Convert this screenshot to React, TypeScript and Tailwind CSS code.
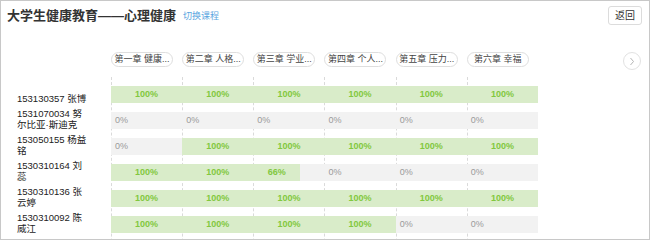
import React from "react";

const FONT = { fontFamily: '"Liberation Sans", "Noto Sans CJK SC", sans-serif' };

const chapters = [
  "第一章 健康...",
  "第二章 人格...",
  "第三章 学业...",
  "第四章 个人...",
  "第五章 压力...",
  "第六章 幸福",
];

const rows: { name: string; p: number[] }[] = [
  { name: "153130357 张博", p: [100, 100, 100, 100, 100, 100] },
  { name: "1531070034 努尔比亚·斯迪克", p: [0, 0, 0, 0, 0, 0] },
  { name: "153050155 杨益铭", p: [0, 100, 100, 100, 100, 100] },
  { name: "1530310164 刘蕊", p: [100, 100, 66, 0, 0, 0] },
  { name: "1530310136 张云婷", p: [100, 100, 100, 100, 100, 100] },
  { name: "1530310092 陈威江", p: [100, 100, 100, 100, 0, 0] },
];

function Cell({ pct }: { pct: number }) {
  return (
    <div className="h-[26px] pt-[4px]">
      <div className="-ml-px w-[calc(100%+1px)] h-[17px] bg-[#f2f2f2] flex">
        {pct > 0 ? (
          <div
            className="h-full bg-[#d9ecc9] flex items-center justify-center text-[9px] leading-[17px] font-bold text-[#82c83e]"
            style={{ width: `${pct}%` }}
          >
            {pct}%
          </div>
        ) : (
          <div className="h-full pl-[4px] flex items-center text-[9px] leading-[17px] text-[#9a9a9a]">
            0%
          </div>
        )}
      </div>
    </div>
  );
}

export default function App() {
  return (
    <div
      className="w-[650px] h-[240px] border border-[#c8c8c8] overflow-hidden bg-white text-[#333]"
      style={FONT}
    >
      {/* header */}
      <div className="flex items-center justify-between pl-[6px] pr-[7px] pt-[5px]">
        <div className="flex items-center">
          <span className="text-[13px] leading-[16px] font-bold text-[#333]">
            大学生健康教育——心理健康
          </span>
          <span className="ml-[7px] text-[9px] leading-[12px] text-[#5aa5e0]">切换课程</span>
        </div>
        <div className="w-[34px] h-[19px] border border-[#dcdcdc] rounded-[3px] flex items-center justify-center text-[10px] text-[#333]">
          返回
        </div>
      </div>

      {/* chapter pills */}
      <div className="flex items-start mt-[27px] h-[18px] pr-[7px]">
        <div className="w-[110px] shrink-0" />
        <div className="grid grid-cols-6 w-[427px]">
          {chapters.map((c) => (
            <div key={c}>
              <div className="w-[62px] h-[15px] border border-[#dedede] rounded-full flex items-center justify-center text-[9px] leading-[13px] text-[#444] whitespace-nowrap overflow-hidden">
                {c}
              </div>
            </div>
          ))}
        </div>
        <div className="ml-auto mr-[1px] w-[18px] h-[18px] rounded-full border border-[#e2e2e2] flex items-center justify-center">
          <svg width="8" height="9" viewBox="0 0 8 9" fill="none">
            <path d="M2.5 1 L5.5 4.5 L2.5 8" stroke="#b5b5b5" strokeWidth="1" />
          </svg>
        </div>
      </div>

      {/* body */}
      <div className="flex mt-[7px]">
        <div className="w-[110px] shrink-0 pt-[5px] pl-[16px]">
          {rows.map((r) => (
            <div key={r.name} className="h-[26px] pb-[4px] flex items-end">
              <div className="w-[72px] text-[9.5px] leading-[11px] text-[#222] break-all">
                {r.name}
              </div>
            </div>
          ))}
        </div>
        <div className="grid grid-cols-6 w-[427px]">
          {[0, 1, 2, 3, 4, 5].map((ci) => (
            <div key={ci} className="border-l border-dashed border-[#dadada] pt-[5px] min-h-[200px]">
              {rows.map((r) => (
                <Cell key={r.name} pct={r.p[ci]} />
              ))}
            </div>
          ))}
        </div>
      </div>
    </div>
  );
}
